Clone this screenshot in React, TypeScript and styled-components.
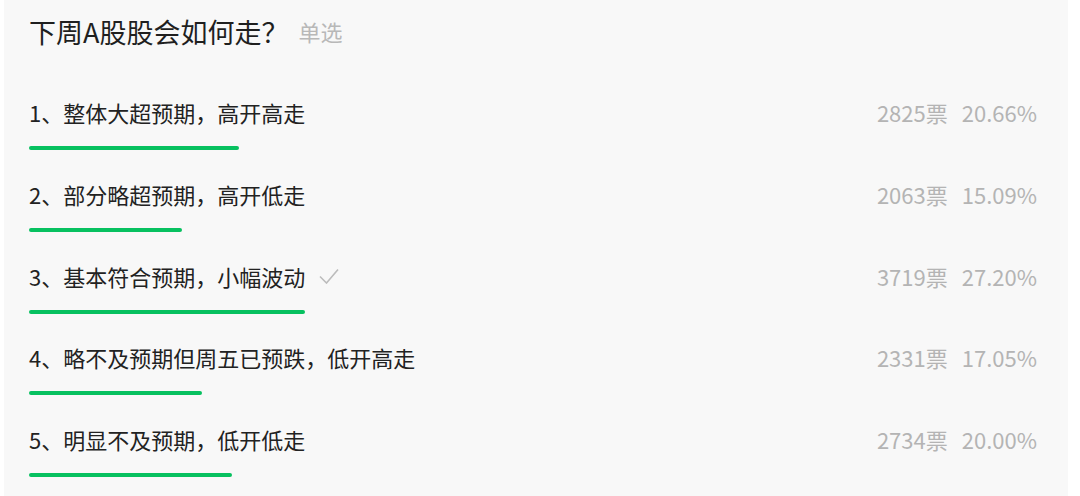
import React from "react";
import styled, { createGlobalStyle } from "styled-components";

const GlobalStyle = createGlobalStyle`
  html, body {
    margin: 0;
    padding: 0;
    background: #ffffff;
  }
  body {
    font-family: "Noto Sans CJK SC", "Noto Sans", sans-serif;
  }
`;

type Option = {
  label: string;
  votes: number;
  percent: string;
  chosen?: boolean;
};

const options: Option[] = [
  { label: "1、整体大超预期，高开高走", votes: 2825, percent: "20.66" },
  { label: "2、部分略超预期，高开低走", votes: 2063, percent: "15.09" },
  { label: "3、基本符合预期，小幅波动", votes: 3719, percent: "27.20", chosen: true },
  { label: "4、略不及预期但周五已预跌，低开高走", votes: 2331, percent: "17.05" },
  { label: "5、明显不及预期，低开低走", votes: 2734, percent: "20.00" },
];

// full width of the bar track, 100%
const TRACK = 1015;

const Panel = styled.div`
  margin: 0 12px 0 4px;
  height: 496px;
  background: #f8f8f8;
  padding: 0 31px 0 25px;
  box-sizing: border-box;
  overflow: hidden;
`;

const Header = styled.div`
  display: flex;
  align-items: center;
  height: 66px;
  padding-bottom: 4px;
  box-sizing: border-box;
`;

const Title = styled.div`
  font-size: 27px;
  color: #1f1f1f;
`;

const Tag = styled.span`
  margin-left: 10px;
  font-size: 22px;
  color: #b8b8b8;
`;

const Row = styled.div`
  padding-top: 32px;
  height: 81.75px;
  box-sizing: border-box;
`;

const Line = styled.div`
  display: flex;
  align-items: center;
  justify-content: space-between;
  height: 32px;
  margin-top: -2px;
`;

const Label = styled.div`
  display: flex;
  align-items: center;
  font-size: 22px;
  color: #222222;
`;

const Check = styled.svg`
  margin-left: 14px;
  width: 20px;
  height: 16px;
`;

const Stats = styled.div`
  display: flex;
  gap: 14px;
  font-size: 22px;
  color: #b4b4b4;
`;

const Bar = styled.div`
  margin-top: 18px;
  height: 4px;
  border-radius: 2px;
  background: #07c160;
`;

export default function App() {
  return (
    <>
      <GlobalStyle />
      <Panel>
        <Header>
          <Title>下周A股股会如何走？</Title>
          <Tag>单选</Tag>
        </Header>
        {options.map((o, i) => (
          <Row key={i}>
            <Line>
              <Label>
                {o.label}
                {o.chosen && (
                  <Check viewBox="0 0 20 16" fill="none" stroke="#bcbcbc" strokeWidth="1.6">
                    <path d="M1 8.5l6.5 6.5L19 1.5" />
                  </Check>
                )}
              </Label>
              <Stats>
                <span>{o.votes}票</span>
                <span>{o.percent}%</span>
              </Stats>
            </Line>
            <Bar style={{ width: (parseFloat(o.percent) / 100) * TRACK }} />
          </Row>
        ))}
      </Panel>
    </>
  );
}
